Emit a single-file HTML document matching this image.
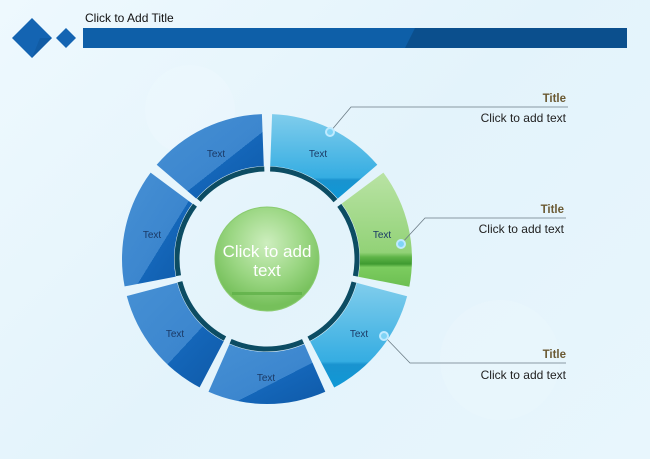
<!DOCTYPE html>
<html><head><meta charset="utf-8"><style>
body{margin:0;width:650px;height:459px;overflow:hidden;background:linear-gradient(135deg,#eef9fe 0%,#e3f3fb 50%,#e8f6fd 100%);font-family:"Liberation Sans",sans-serif;}
svg{position:absolute;left:0;top:0}
</style></head><body>
<svg width="650" height="459" viewBox="0 0 650 459">
<defs>
<linearGradient id="bl" x1="0" y1="0" x2="1" y2="1">
<stop offset="0" stop-color="#4690d4"/><stop offset="0.6" stop-color="#3c86ce"/><stop offset="0.6" stop-color="#1466b9"/><stop offset="1" stop-color="#0f5aa8"/></linearGradient>
<linearGradient id="cy" x1="0" y1="0" x2="0" y2="1">
<stop offset="0" stop-color="#80cdec"/><stop offset="0.75" stop-color="#35ade2"/><stop offset="0.78" stop-color="#1a93cf"/><stop offset="1" stop-color="#0f98d6"/></linearGradient>
<linearGradient id="gr" x1="0" y1="0" x2="0" y2="1">
<stop offset="0" stop-color="#b9e3a4"/><stop offset="0.7" stop-color="#92d277"/><stop offset="0.74" stop-color="#5fb548"/><stop offset="0.8" stop-color="#3f9a30"/><stop offset="0.83" stop-color="#7ccc5f"/><stop offset="1" stop-color="#6cbf52"/></linearGradient>
<radialGradient id="ball" cx="0.5" cy="0.35" r="0.6">
<stop offset="0" stop-color="#cdeebe"/><stop offset="0.6" stop-color="#9ad682"/><stop offset="1" stop-color="#76c05b"/></radialGradient>
</defs>
<circle cx="190" cy="110" r="45" fill="#f2fbff" opacity="0.25"/>
<circle cx="500" cy="360" r="60" fill="#eef8fd" opacity="0.3"/>
<polygon points="32,18 52,38 32,58 12,38" fill="#1464b2"/>
<polygon points="52,38 32,58 40,38" fill="#0d5497" opacity="0.5"/>
<polygon points="66,28 76,38 66,48 56,38" fill="#1464b2"/>
<rect x="83" y="28" width="544" height="20" fill="#0e5fa8"/>
<polygon points="415,28 627,28 627,48 405,48" fill="#0b4f8d"/>
<text x="85" y="22" font-size="12" fill="#111">Click to Add Title</text>
<path d="M272.1,114.1 A145,145 0 0 1 377.3,164.8 L337.7,198.6 A93,93 0 0 0 270.2,166.1 Z" fill="url(#cy)"/>
<path d="M383.4,172.6 A145,145 0 0 1 409.3,286.7 L358.3,276.7 A93,93 0 0 0 341.7,203.6 Z" fill="url(#gr)"/>
<path d="M407.1,296.3 A145,145 0 0 1 334.2,387.5 L310.1,341.4 A93,93 0 0 0 356.9,282.9 Z" fill="url(#cy)"/>
<path d="M325.3,391.8 A145,145 0 0 1 208.5,391.7 L229.5,344.1 A93,93 0 0 0 304.4,344.2 Z" fill="url(#bl)"/>
<path d="M199.6,387.4 A145,145 0 0 1 126.8,296.0 L177.1,282.8 A93,93 0 0 0 223.8,341.3 Z" fill="url(#bl)"/>
<path d="M124.6,286.4 A145,145 0 0 1 150.6,172.6 L192.3,203.6 A93,93 0 0 0 175.7,276.6 Z" fill="url(#bl)"/>
<path d="M156.7,164.8 A145,145 0 0 1 261.9,114.1 L263.8,166.1 A93,93 0 0 0 196.3,198.6 Z" fill="url(#bl)"/>
<circle cx="267" cy="259" r="90" fill="none" stroke="#0c4c63" stroke-width="5" stroke-dasharray="74.6 6.2" transform="rotate(-88 267 259)"/>
<g font-size="10" fill="#1b3a66" text-anchor="middle">
<text x="318" y="157">Text</text><text x="382" y="238">Text</text><text x="359" y="337">Text</text>
<text x="266" y="381">Text</text><text x="175" y="337">Text</text><text x="152" y="238">Text</text><text x="216" y="157">Text</text>
</g>
<circle cx="267" cy="259" r="52" fill="url(#ball)" stroke="#8acb70" stroke-width="1"/>
<rect x="232" y="292" width="70" height="3" fill="#5bae44" opacity="0.7"/>
<text x="267" y="257" font-size="17" fill="#fff" text-anchor="middle">Click to add</text>
<text x="267" y="276" font-size="17" fill="#fff" text-anchor="middle">text</text>
<g stroke="#6b7b85" stroke-width="0.8" fill="none">
<polyline points="330,132 351,107 568,107"/>
<polyline points="401,244 425,218 566,218"/>
<polyline points="384,336 410,363 566,363"/>
</g>
<g fill="#7fd4f6" stroke="#bfeaff" stroke-width="2">
<circle cx="330" cy="132" r="4"/><circle cx="401" cy="244" r="4"/><circle cx="384" cy="336" r="4"/>
</g>
<g font-size="12" text-anchor="end">
<text x="566" y="102" font-weight="bold" fill="#6b5a33" font-size="11.5">Title</text>
<text x="566" y="122" fill="#222">Click to add text</text>
<text x="564" y="213" font-weight="bold" fill="#6b5a33" font-size="11.5">Title</text>
<text x="564" y="233" fill="#222">Click to add text</text>
<text x="566" y="358" font-weight="bold" fill="#6b5a33" font-size="11.5">Title</text>
<text x="566" y="379" fill="#222">Click to add text</text>
</g>
</svg>
</body></html>
